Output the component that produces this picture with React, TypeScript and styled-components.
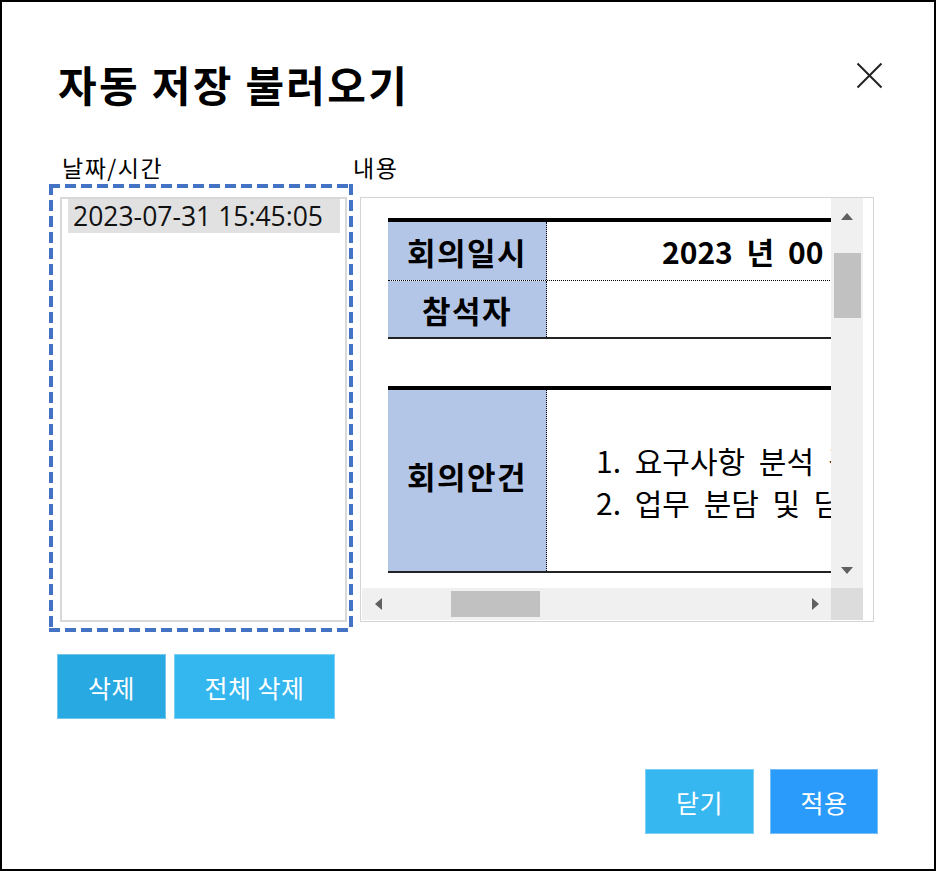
import React from "react";
import styled, { createGlobalStyle } from "styled-components";

const KR = `"Noto Sans CJK KR", "Noto Sans", sans-serif`;
const LATIN = `"Open Sans", "Noto Sans CJK KR", sans-serif`;

const GlobalStyle = createGlobalStyle`
  html, body { margin: 0; padding: 0; background: #fff; }
  body { font-family: ${KR}; }
  * { box-sizing: border-box; }
`;

const Dialog = styled.div`
  width: 936px;
  height: 871px;
  border: 2px solid #000;
  background: #fff;
  display: flex;
  flex-direction: column;
  font-family: ${KR};
  color: #000;
`;

const Header = styled.div`
  display: flex;
  justify-content: space-between;
  align-items: flex-start;
  margin-top: 57px;
  height: 50px;
  padding: 0 51px 0 56px;
`;

const Title = styled.h1`
  margin: 0;
  font-size: 42px;
  line-height: 50px;
  font-weight: 700;
  letter-spacing: 2.3px;
  white-space: nowrap;
`;

const CloseButton = styled.button`
  margin-top: 3px;
  width: 27px;
  height: 27px;
  padding: 0;
  border: none;
  background: none;
  display: flex;
  cursor: pointer;
`;

const Body = styled.div`
  display: flex;
  margin-top: 45px;
  padding-left: 47px;
`;

const Column = styled.div`
  display: flex;
  flex-direction: column;
`;

const Label = styled.div<{ $indent: number; $gap: number }>`
  font-size: 23px;
  line-height: 26px;
  letter-spacing: 1.5px;
  margin-left: ${(p) => p.$indent}px;
  margin-bottom: ${(p) => p.$gap}px;
  white-space: nowrap;
`;

const SelectionFrame = styled.div`
  width: 304px;
  height: 448px;
  padding: 13px 6px 10px 11px;
  background:
    linear-gradient(to right, #4472c4 11px, transparent 11px) left top / 16px 4px repeat-x,
    linear-gradient(to right, #4472c4 11px, transparent 11px) left bottom / 16px 4px repeat-x,
    linear-gradient(to bottom, #4472c4 11px, transparent 11px) left top / 4px 16px repeat-y,
    linear-gradient(to bottom, #4472c4 11px, transparent 11px) right top / 4px 16px repeat-y;
`;

const ListBox = styled.div`
  width: 287px;
  height: 425px;
  border: 2px solid #d8d8d8;
  padding: 0 5px 0 6px;
  background: #fff;
`;

const ListItem = styled.div<{ $selected?: boolean }>`
  height: 34px;
  line-height: 34px;
  padding-left: 5px;
  font-family: ${LATIN};
  font-size: 26.5px;
  color: #111;
  background: ${(p) => (p.$selected ? "#e1e1e1" : "transparent")};
  white-space: nowrap;
  overflow: hidden;
`;

const Preview = styled.div`
  margin-left: 7px;
  width: 514px;
  height: 425px;
  border: 1px solid #d4d4d4;
  display: grid;
  grid-template-columns: 470px 32px 10px;
  grid-template-rows: 390px 32px 1px;
  background: #fff;
`;

const SheetViewport = styled.div`
  grid-area: 1 / 1;
  overflow: hidden;
  padding: 20px 0 0 27px;
`;

const Sheet = styled.div`
  width: 760px;
  display: flex;
  flex-direction: column;
`;

const ThickRule = styled.div`
  height: 4px;
  background: #000;
`;

const Spacer = styled.div<{ $h: number }>`
  height: ${(p) => p.$h}px;
`;

const SheetRow = styled.div<{ $h: number; $bottom: "dotted" | "solid" }>`
  display: grid;
  grid-template-columns: 159px 1fr;
  height: ${(p) => p.$h}px;
  border-bottom: ${(p) => (p.$bottom === "dotted" ? "1px dotted #000" : "2px solid #222")};
  box-sizing: content-box;
`;

const HeadCell = styled.div<{ $lift?: number }>`
  background: #b4c6e7;
  border-right: 1px dotted #000;
  display: flex;
  align-items: center;
  justify-content: center;
  padding-bottom: ${(p) => p.$lift ?? 0}px;
  font-size: 31px;
  font-weight: 700;
  letter-spacing: 1.5px;
  white-space: nowrap;
`;

const ValueCell = styled.div<{ $pad: number; $bold?: boolean }>`
  display: flex;
  flex-direction: column;
  justify-content: center;
  padding-left: ${(p) => p.$pad}px;
  font-size: 30px;
  font-weight: ${(p) => (p.$bold ? 700 : 400)};
  line-height: 42px;
  white-space: nowrap;
  word-spacing: 7px;
`;

const VScroll = styled.div`
  grid-area: 1 / 2;
  background: #f0f0f0;
  display: flex;
  flex-direction: column;
  align-items: center;
`;

const HScroll = styled.div`
  grid-area: 2 / 1;
  background: #f0f0f0;
  display: flex;
  align-items: center;
  margin-left: 1px;
`;

const Corner = styled.div`
  grid-area: 2 / 2;
  background: #dcdcdc;
`;

const ArrowBox = styled.div<{ $w: string; $h: string }>`
  width: ${(p) => p.$w};
  height: ${(p) => p.$h};
  flex-shrink: 0;
  display: flex;
  align-items: center;
  justify-content: center;
`;

const Triangle = styled.div<{ $dir: "up" | "down" | "left" | "right" }>`
  width: 0;
  height: 0;
  ${(p) =>
    p.$dir === "up"
      ? "border-left: 6px solid transparent; border-right: 6px solid transparent; border-bottom: 7px solid #606060;"
      : p.$dir === "down"
      ? "border-left: 6px solid transparent; border-right: 6px solid transparent; border-top: 7px solid #606060;"
      : p.$dir === "left"
      ? "border-top: 6px solid transparent; border-bottom: 6px solid transparent; border-right: 7px solid #606060;"
      : "border-top: 6px solid transparent; border-bottom: 6px solid transparent; border-left: 7px solid #606060;"}
`;

const VThumb = styled.div`
  width: 27px;
  height: 65px;
  margin-top: 19px;
  background: #c1c1c1;
`;

const HThumb = styled.div`
  width: 89px;
  height: 26px;
  margin-left: 56px;
  background: #c1c1c1;
`;

const Fill = styled.div`
  flex: 1;
`;

const ActionRow = styled.div`
  display: flex;
  gap: 8px;
  margin-top: 22px;
  padding-left: 55px;
`;

const Footer = styled.div`
  display: flex;
  justify-content: flex-end;
  gap: 16px;
  margin-top: 50px;
  padding-right: 56px;
`;

const Button = styled.button<{ $bg: string; $w: number }>`
  width: ${(p) => p.$w}px;
  height: 65px;
  background: ${(p) => p.$bg};
  border: 1px solid rgba(255, 255, 255, 0.35);
  color: #fff;
  font-family: ${KR};
  font-size: 25px;
  letter-spacing: 0.5px;
  padding: 0;
  cursor: pointer;
`;

export default function App() {
  return (
    <>
      <GlobalStyle />
      <Dialog>
        <Header>
          <Title>자동 저장 불러오기</Title>
          <CloseButton aria-label="닫기">
            <svg width="27" height="27" viewBox="0 0 27 27">
              <path d="M1.5 1.5 L25.5 25.5 M25.5 1.5 L1.5 25.5" stroke="#222" strokeWidth="2" fill="none" />
            </svg>
          </CloseButton>
        </Header>
        <Body>
          <Column>
            <Label $indent={13} $gap={4}>날짜/시간</Label>
            <SelectionFrame>
              <ListBox>
                <ListItem $selected>2023-07-31 15:45:05</ListItem>
              </ListBox>
            </SelectionFrame>
          </Column>
          <Column>
            <Label $indent={0} $gap={17}>내용</Label>
            <Preview>
              <SheetViewport>
                <Sheet>
                  <ThickRule />
                  <SheetRow $h={58} $bottom="dotted">
                    <HeadCell>회의일시</HeadCell>
                    <ValueCell $pad={115} $bold>2023 년 00 월 00 일</ValueCell>
                  </SheetRow>
                  <SheetRow $h={56} $bottom="solid">
                    <HeadCell>참석자</HeadCell>
                    <ValueCell $pad={115} />
                  </SheetRow>
                  <Spacer $h={47} />
                  <ThickRule />
                  <SheetRow $h={181} $bottom="solid">
                    <HeadCell $lift={10}>회의안건</HeadCell>
                    <ValueCell $pad={49}>
                      <span>1. 요구사항 분석 결과 공유</span>
                      <span>2. 업무 분담 및 담당자 지정</span>
                    </ValueCell>
                  </SheetRow>
                </Sheet>
              </SheetViewport>
              <VScroll>
                <ArrowBox $w="100%" $h="36px"><Triangle $dir="up" /></ArrowBox>
                <VThumb />
                <Fill />
                <ArrowBox $w="100%" $h="36px"><Triangle $dir="down" /></ArrowBox>
              </VScroll>
              <HScroll>
                <ArrowBox $w="33px" $h="100%"><Triangle $dir="left" /></ArrowBox>
                <HThumb />
                <Fill />
                <ArrowBox $w="32px" $h="100%"><Triangle $dir="right" /></ArrowBox>
              </HScroll>
              <Corner />
            </Preview>
          </Column>
        </Body>
        <ActionRow>
          <Button $bg="#28a9e1" $w={109}>삭제</Button>
          <Button $bg="#34b6ef" $w={161}>전체 삭제</Button>
        </ActionRow>
        <Footer>
          <Button $bg="#36b7f0" $w={109}>닫기</Button>
          <Button $bg="#2a9bfb" $w={108}>적용</Button>
        </Footer>
      </Dialog>
    </>
  );
}
